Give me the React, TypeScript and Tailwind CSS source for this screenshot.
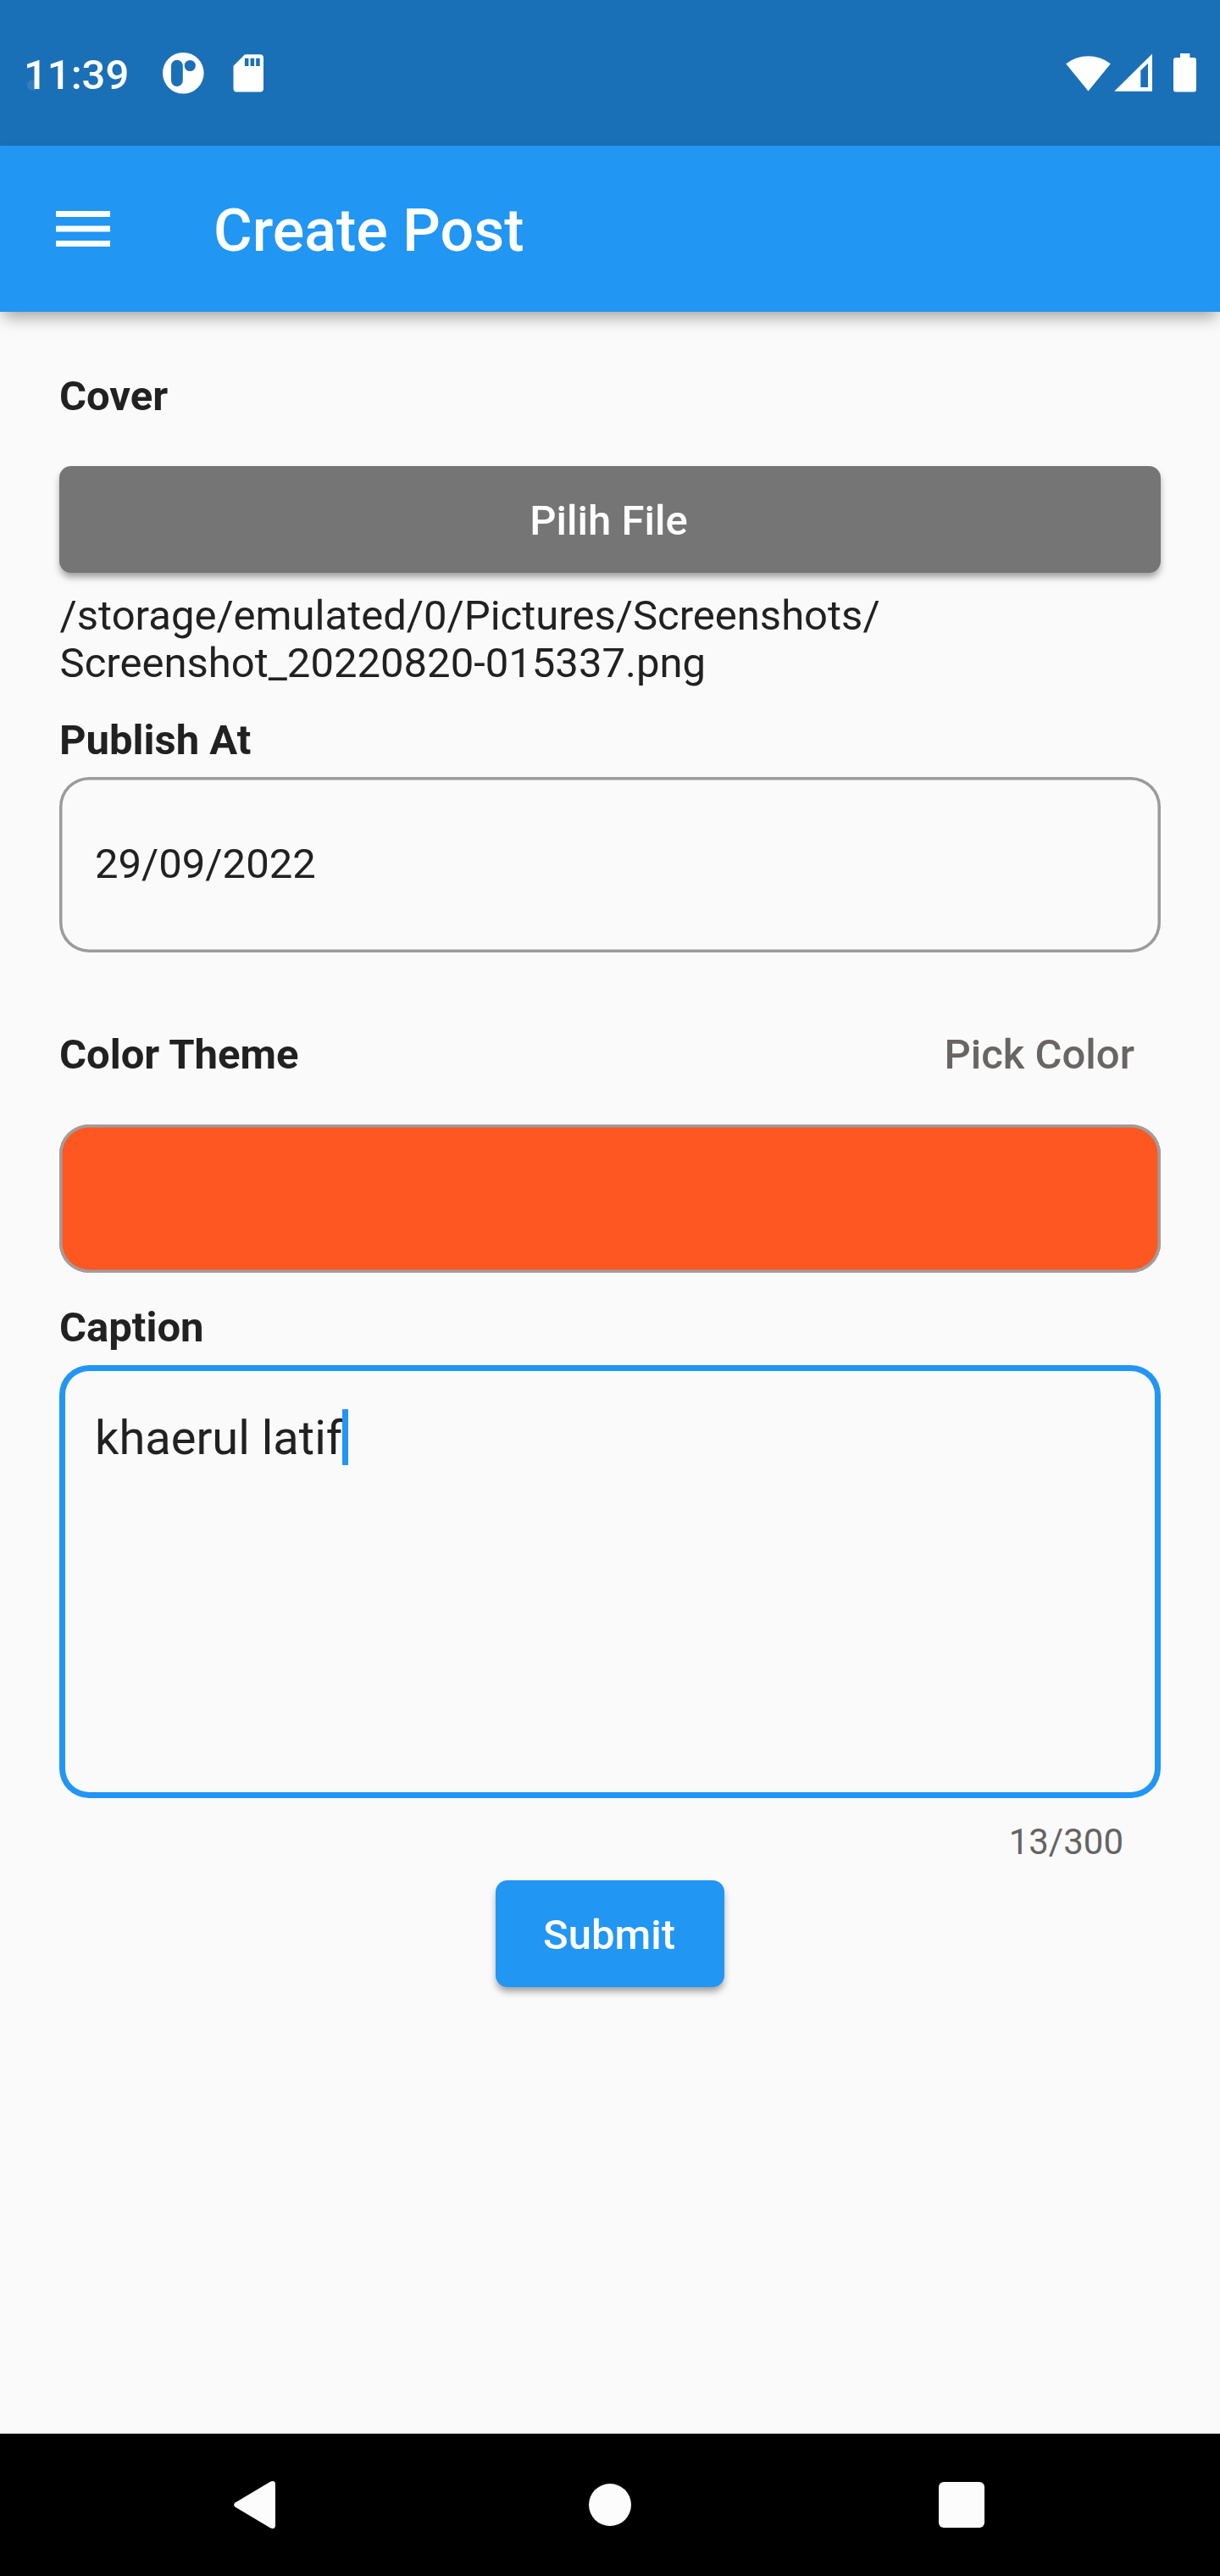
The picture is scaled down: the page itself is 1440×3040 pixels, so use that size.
import React from "react";

function StatusBar() {
  return (
    <div className="flex h-[172px] items-start justify-between bg-[#1a70b7] pl-[28px] pr-[28px] text-white">
      <div className="flex">
        <div className="relative mt-[60px] w-[164px] text-[49px] font-medium leading-[57px]">
          <span className="absolute left-[4px] top-[34px] h-[13px] w-[13px] rounded-full bg-white/10" />
          <span className="relative">11:39</span>
        </div>
        <svg className="mt-[62px] h-[49px] w-[49px]" viewBox="0 0 49 49" fill="#fff">
          <path
            fillRule="evenodd"
            d="M24.3 0a24.3 24.3 0 1 1 0 48.6a24.3 24.3 0 1 1 0-48.6zM16.9 8.7A6.9 6.9 0 0 0 10 15.6V33.1a6.9 6.9 0 0 0 13.8 0V15.6A6.9 6.9 0 0 0 16.9 8.7zM32.3 8.9a6.6 6.6 0 1 0 0 13.2a6.6 6.6 0 1 0 0-13.2z"
          />
        </svg>
        <svg className="ml-[34px] mt-[64px] h-[45px] w-[37px]" viewBox="275 64 37 45" fill="#fff">
          <path
            fillRule="evenodd"
            d="M289 64.3H307a4 4 0 0 1 4 4V104.5a4 4 0 0 1-4 4H279.500a4 4 0 0 1-4-4V77.800zM288.900 68.700V78H293.400V68.700zM295.600 68.700V78H300.100V68.700zM302.200 68.700V78H306.700V68.700z"
          />
        </svg>
      </div>
      <svg className="mt-[62px] h-[48px] w-[155px]" viewBox="1257 62 155 48" fill="#fff">
        <path d="M1258.200 75.200A43 43 0 0 1 1310.800 75.200L1284.500 107.500z" />
        <path
          fillRule="evenodd"
          d="M1360 63.500V107.800H1315.200zM1355 74.800L1346.300 83.300V103H1355z"
        />
        <path d="M1393 63h11.400v5h4.600a3 3 0 0 1 3 3v34.600a3 3 0 0 1-3 3h-21a3 3 0 0 1-3-3V71a3 3 0 0 1 3-3h5z" />
      </svg>
    </div>
  );
}

function AppBar() {
  return (
    <header className="relative flex h-[196px] items-center bg-[#2196f3] pl-[66px] text-white shadow-[0_10px_18px_-4px_rgba(0,0,0,0.36)]">
      <svg className="h-[42px] w-[64px]" viewBox="0 0 64 42" fill="#fff">
        <path d="M0 0h64v7H0zM0 17.400h64v7H0zM0 35h64v7H0z" />
      </svg>
      <h1 className="ml-[122px] mt-[4px] text-[70px] font-medium leading-[82px]">Create Post</h1>
    </header>
  );
}

function Label({ children }: { children: React.ReactNode }) {
  return <div className="h-[56px] text-[49px] font-bold leading-[57px]">{children}</div>;
}

function NavBar() {
  return (
    <nav className="flex h-[168px] items-center bg-black pl-[276px]">
      <svg className="h-[56px] w-[49px]" viewBox="0 0 49 56" fill="#fcfcfc">
        <path d="M1.500 25.500L43 .7Q49-1.500 49 4V52Q49 57.500 43 55.300L1.500 30.500Q-1.300 28 1.500 25.500z" />
      </svg>
      <div className="ml-[370.400px] h-[49.500px] w-[49.200px] rounded-full bg-[#fcfcfc]" />
      <div className="ml-[363.700px] h-[53.400px] w-[53.400px] rounded-[6px] bg-[#fcfcfc]" />
    </nav>
  );
}

export default function App() {
  return (
    <div className="flex h-[3040px] w-[1440px] flex-col overflow-hidden bg-[#fafafa] font-['Roboto',sans-serif] text-[#212121]">
      <StatusBar />
      <AppBar />
      <main className="flex grow flex-col px-[70px] pt-[71px]">
        <Label>Cover</Label>
        <button className="mt-[55px] h-[126px] w-full rounded-[14px] bg-[#757575] pr-[3px] pt-[4px] text-[49px] font-medium leading-[56px] text-white shadow-[0_6px_9px_-1px_rgba(0,0,0,0.38)]">
          Pilih File
        </button>
        <div className="mt-[23px] pl-[0.600px] text-[49px] leading-[56px]">
          /storage/emulated/0/Pictures/Screenshots/
          <br />
          Screenshot_20220820-015337.png
        </div>
        <div className="mt-[34px]">
          <Label>Publish At</Label>
        </div>
        <div className="mt-[16px] flex h-[207px] items-start rounded-[35px] pl-[42px] pt-[75px] text-[49px] leading-[56px] shadow-[inset_0_0_0_3.5px_#9b9b9b]">
          29/09/2022
        </div>
        <div className="mt-[92px] flex items-start justify-between">
          <Label>Color Theme</Label>
          <button className="mr-[31px] h-[56px] text-[49px] font-medium leading-[57px] text-[#696564]">
            Pick Color
          </button>
        </div>
        <div className="mt-[55px] h-[175px] rounded-[35px] bg-[#ff5722] shadow-[inset_0_0_0_3.5px_#9e9e9e]" />
        <div className="mt-[36px]">
          <Label>Caption</Label>
        </div>
        <div className="mt-[16.500px] flex h-[511.200px] items-start rounded-[35px] pl-[42px] pt-[52.500px] shadow-[inset_0_0_0_7px_#2196f3]">
          <span className="text-[56px] leading-[68px]">khaerul latif</span>
          <span className="h-[65.500px] w-[7px] bg-[#2196f3]" />
        </div>
        <div className="mt-[27.300px] pr-[44px] text-right text-[42px] leading-[49px] text-[#646464]">
          13/300
        </div>
        <button className="mt-[21.500px] h-[126px] w-[270px] self-center rounded-[14px] bg-[#2196f3] pr-[2px] pt-[4px] text-[49px] font-medium leading-[56px] text-white shadow-[0_6px_9px_-1px_rgba(0,0,0,0.38)]">
          Submit
        </button>
      </main>
      <NavBar />
    </div>
  );
}
